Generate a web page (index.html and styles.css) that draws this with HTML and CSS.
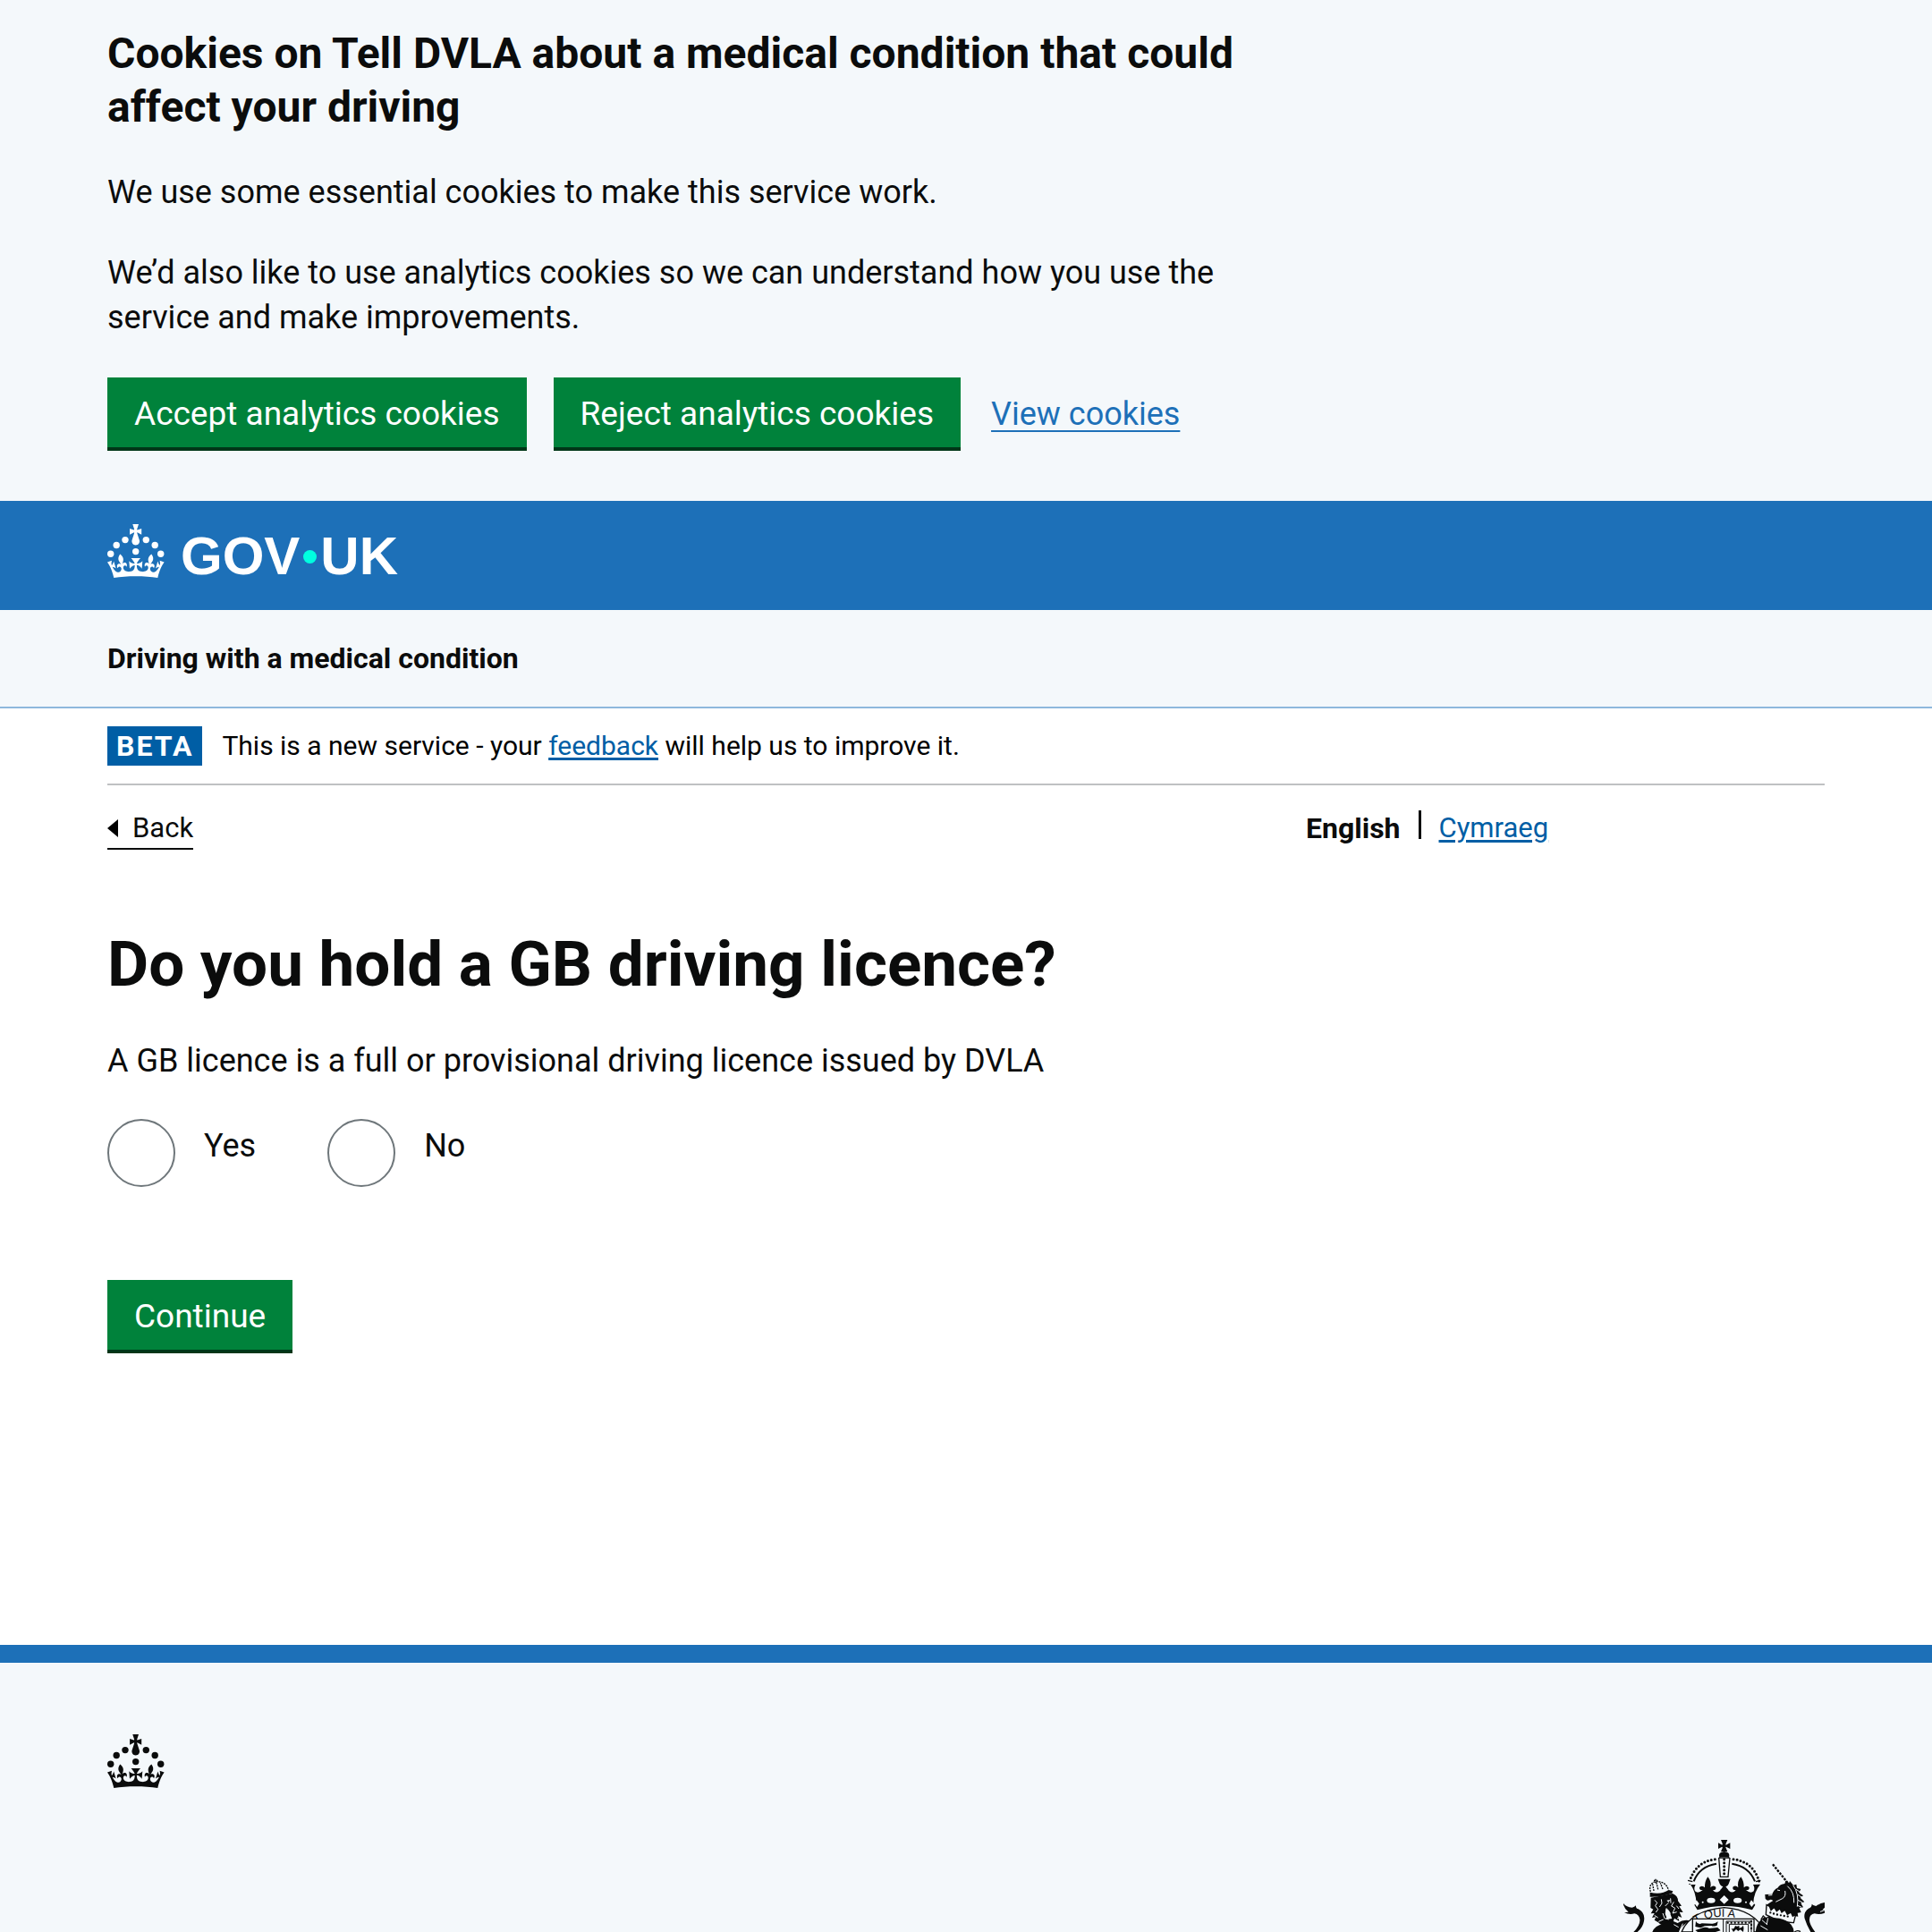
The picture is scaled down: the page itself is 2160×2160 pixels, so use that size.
FILE: index.html
```html
<!DOCTYPE html>
<html lang="en">
<head>
<meta charset="utf-8">
<meta name="viewport" content="width=device-width, initial-scale=1">
<title>Do you hold a GB driving licence?</title>
<link rel="stylesheet" href="styles.css">
</head>
<body>
<svg class="defs" width="0" height="0" aria-hidden="true">
  <symbol id="crown" viewBox="0 0 64 60">
    <circle cx="20" cy="17.6" r="3.7"/><circle cx="10.2" cy="23.5" r="3.7"/><circle cx="3.7" cy="33.2" r="3.7"/><circle cx="31.7" cy="30.6" r="3.7"/><circle cx="43.3" cy="17.6" r="3.7"/><circle cx="53.2" cy="23.5" r="3.7"/><circle cx="59.7" cy="33.2" r="3.7"/>
    <path d="M33.1,9.8c.2-.1.3-.3.5-.5l4.6,2.4v-6.8l-4.6,1.5c-.1-.2-.3-.3-.5-.5l1.9-5.9h-6.7l1.9,5.9c-.2.1-.3.3-.5.5l-4.6-1.5v6.8l4.6-2.4c.1.2.3.3.5.5l-2.6,8c-.9,2.8,1.2,5.7,4.1,5.7h0c3,0,5.1-2.9,4.1-5.7l-2.6-8ZM37,37.9s-3.4,3.8-4.1,6.1c2.2,0,4.2-.5,6.4-2.8l-.7,8.5c-2-2.8-4.4-4.1-5.7-3.8.1,3.1.5,6.7,5.8,7.2,3.7.3,6.7-1.5,7-3.8.4-2.6-2-4.3-3.7-1.6-1.4-4.5,2.4-6.1,4.9-3.2-1.9-4.5-1.8-7.7,2.4-10.9,3,4,2.6,7.3-1.2,11.1,2.4-1.3,6.2,0,4,4.6-1.2-2.8-3.7-2.2-4.2.2-.3,1.7.7,3.7,3,4.2,1.9.3,4.7-.9,7-5.9-1.3,0-2.4.7-3.9,1.7l2.4-8c.6,2.3,1.4,3.7,2.2,4.5.6-1.6.5-2.8,0-5.3l5,1.8c-2.6,3.6-5.2,8.7-7.3,17.5-7.4-1.1-15.7-1.7-24.5-1.7h0c-8.8,0-17.1.6-24.5,1.7-2.1-8.9-4.7-13.9-7.3-17.5l5-1.8c-.5,2.5-.6,3.7,0,5.3.8-.8,1.6-2.3,2.2-4.5l2.4,8c-1.5-1-2.6-1.7-3.9-1.7,2.3,5,5.2,6.2,7,5.9,2.3-.4,3.3-2.4,3-4.2-.5-2.4-3-3.1-4.2-.2-2.2-4.6,1.6-6,4-4.6-3.7-3.7-4.2-7.1-1.2-11.1,4.2,3.2,4.3,6.4,2.4,10.9,2.5-2.8,6.3-1.3,4.9,3.2-1.8-2.7-4.1-1-3.7,1.6.3,2.3,3.3,4.1,7,3.8,5.4-.5,5.7-4.2,5.8-7.2-1.3-.2-3.7,1-5.7,3.8l-.7-8.5c2.2,2.3,4.2,2.7,6.4,2.8-.7-2.3-4.1-6.1-4.1-6.1h10.6,0Z"/>
  </symbol>
</svg>

<section class="cookies" aria-label="Cookies">
  <div class="cookies-body">
    <h2 class="cookies-title">Cookies on Tell DVLA about a medical condition that could affect your driving</h2>
    <p class="text">We use some essential cookies to make this service work.</p>
    <p class="text">We’d also like to use analytics cookies so we can understand how you use the service and make improvements.</p>
  </div>
  <div class="cookies-actions">
    <button class="button" type="button">Accept analytics cookies</button>
    <button class="button" type="button">Reject analytics cookies</button>
    <a class="cookies-link" href="#cookies">View cookies</a>
  </div>
</section>

<header class="header">
  <a class="logo" href="#home" aria-label="GOV.UK">
    <svg class="crown" aria-hidden="true"><use href="#crown"/></svg>
    <span class="logo-text">GOV<span class="logo-dot"></span>UK</span>
  </a>
</header>

<div class="service"><a class="service-name" href="#service">Driving with a medical condition</a></div>

<div class="wrap">
  <div class="phase">
    <strong class="tag">BETA</strong>
    <span>This is a new service - your <a class="link" href="#feedback">feedback</a> will help us to improve it.</span>
  </div>
  <div class="toolbar">
    <div><a class="back" href="#back"><svg class="back-arrow" viewBox="0 0 12 20" aria-hidden="true"><path d="M12 0v20L0 10z"/></svg>Back</a></div>
    <nav class="languages" aria-label="Language">
      <strong>English</strong>
      <span class="divider"></span>
      <a class="link" href="#cy" lang="cy">Cymraeg</a>
    </nav>
  </div>
  <main>
    <form class="question">
      <h1 class="title">Do you hold a GB driving licence?</h1>
      <p class="text" id="hint">A GB licence is a full or provisional driving licence issued by DVLA</p>
      <div class="radios" role="radiogroup" aria-describedby="hint">
        <label class="radio"><input type="radio" name="licence" value="yes"><span>Yes</span></label>
        <label class="radio"><input type="radio" name="licence" value="no"><span>No</span></label>
      </div>
      <button class="button" type="button">Continue</button>
    </form>
  </main>
</div>

<footer class="footer">
  <svg class="crown" aria-hidden="true"><use href="#crown"/></svg>
  <svg class="arms" viewBox="105 81 675 309" role="img" aria-label="Royal coat of arms">
    <!-- main crown: cross, orb, arches -->
    <path d="M432 81h22l-5 12q-2 4 0 5l14-7v20l-14-7q-2 1 0 5l5 11h-22l5-11q1-4-1-5l-13 7V91l13 7q2-1 1-5z"/>
    <path d="M427 141q-6-19 16-21q22 2 16 21l-6-3h-20z"/>
    <path d="M425 141h36M425 141l5 63M462 141l-6 63M428 205h30" class="stroke w4"/>
    <path d="M443 146v60" class="stroke w9 bead"/>
    <path d="M412 146Q348 154 327 220M474 146Q540 154 560 220" class="stroke w9 bead"/>
    <path d="M417 161Q360 170 341 220M469 161Q526 170 546 220" class="stroke w6"/>
    <path d="M321 217l16 4M549 221l16-4" class="stroke w4"/>
    <!-- crown fleurs, crosses and band -->
    <path d="M323 230l24 1q-7 12-2 22q10 10 26-4q-12 2-11-9q10-8 18 1q-1-20 10-36q13 15 9 36q8-10 18-2q2 11-10 10q10 14 24 2q9-11-1-22l-6-17h42l-6 17q-9 11 0 22q14 12 24-2q-12 1-10-10q10-8 18 2q-4-21 9-36q11 16 10 36q8-9 18-1q1 11-11 9q16 14 26 4q5-10-2-22l24-1q-22 27-23 62l6 7l-10 17q-93-26-184 0l-10-17l6-7q0-35-21-65z"/>
    <g class="paper">
      <path d="M443 267l15 15l-15 14l-15-14zM350 283l9 12l-7 11l-8-11zM534 283l10 12l-9 11l-8-11z"/>
      <ellipse cx="399" cy="284" rx="14" ry="9"/><ellipse cx="488" cy="284" rx="14" ry="9"/>
      <circle cx="371" cy="290" r="3"/><circle cx="516" cy="290" r="3"/>
      <path d="M429 233l10 5l-7 9zM458 233l-10 5l7 9z"/>
    </g>
    <!-- garter and shield -->
    <path d="M300 390Q330 318 443 308Q545 315 580 390z" class="paper outline"/>
    <path id="garter" d="M330 380Q362 338 443 339Q520 340 552 384" fill="none"/>
    <text class="motto"><textPath href="#garter" startOffset="26">T QUI A</textPath></text>
    <path d="M337 346h206v50H337z" class="paper outline"/>
    <path d="M440 346v44M450 354h84v36M450 354v36M460 390v-26h64v26" class="stroke w3"/>
    <path d="M534 354v36M455 359h74" class="stroke w7 bead"/>
    <path d="M348 354q8 14 20 7l34 1q10 1 20-7l-3 13q-15 5-18 1l-23 1l-14 6l-18-4zM346 384l19-6q15-8 28 0l28-3l10 10l-17 5h-60z"/>
    <path d="M474 390l-7-12q9 5 13-9q7 5 13-1l1 9q9-2 13-9q3 9 0 22l-10-8l-7 5l-7-6z"/>
    <!-- lion -->
    <path d="M196 255q-8-26 16-34q36-2 44 28M207 252l-4-23M221 247l-6-26M237 246l-8-20M213 212v14M207 217h13" class="stroke w4 fine"/>
    <path d="M194 257q38 9 63-8l14 4l-3 7q-35 13-74 12z"/>
    <path d="M197 275l73-14q18 7 18 25l12 16l-8 2l13 20l-12-1l8 19l-13-6l4 18l-16-10l-6 16q-27 20-48-2l-13-8l5-10l-13 2l8-15l-12 1l8-14l-9-5z"/>
    <path d="M210 283l8 9l-6 10l9 12l-7 10M232 280l2 14l-8 12M245 303l11-11M263 277l1 16M274 289l-8 14l12 7l-8 17l14-4M249 310l13 17l-14 20M237 327l6 17l14 4M209 334l12 8M223 355l16-7M283 302l8 10" class="line"/>
    <path d="M250 284l13-2l-7 8zM247 311l11 7l10 27l-16 2l-7-18z" class="paper"/>
    <path d="M202 390q10-23 35-26l30-12l20 8q18-13 42-8q-31 17-38 38z"/>
    <path d="M285 345q10-5 17 1M274 365l16 9M304 362l-10 24" class="line"/>
    <!-- lion's tail -->
    <path d="M103 291q10 16 31 17q8-2 13-7q-1 10 8 12q24 12 19 40q-4 24-26 40h-12q26-25 24-45q-2-17-18-20q-17 5-34-3l14-2q-16-12-19-32z"/>
    <!-- unicorn -->
    <path d="M606 163L655 224" class="stroke w7 horn"/>
    <path d="M580 264l24-1q6-16 18-21q9-13 24-14l3-10l12 7l2-6l12 14l10-3l2 13l13 3l-6 12l14 10l-10 7l14 14l-12 4l8 14l-13 3l6 14l-12 2l2 12l-10-1l-6 13q-34-3-78-17l-14-24l6-13l18-11q-8-6-12-2q-8 4-14-5z"/>
    <path d="M591 267l13-1M621 249l9 2M655 236q24 20 22 56M674 233q21 28 14 72M684 247l15 10M690 265l16 10M690 283l16 8M687 300l15 7M647 252q4 19-9 26l-22 11" class="line"/>
    <path d="M585 299l10 5l5 13l11-10l8 13l11-9l6 13l11-8l8 15l12-7l6 13l10-6l-7 28q-45-1-93-27z" class="paper outline"/>
    <path d="M598 325q30 10 68 14" class="stroke w7 bead"/>
    <path d="M548 390q3-32 27-48q58-2 75 10q24 11 27 38z"/>
    <path d="M570 350l18 16M590 342l-4 21M565 369l24 14" class="line"/>
    <path d="M566 349l8-13l9 8l12-6l4 9" class="stroke w4"/>
    <!-- unicorn's tail -->
    <path d="M780 291q-17 3-29 12q-12-3-14-7q0 12-11 15q-18 13-13 34q6 20 20 45h15q-21-27-19-43q1-17 17-19q17 5 34-2v-9l-8-1l8-8z"/>
    <path d="M765 322l15-5" class="line"/>
    <path d="M679 390q9-8 20-1" class="stroke w4"/>
  </svg>
</footer>
</body>
</html>
```
FILE: styles.css
```css
* { box-sizing: border-box; }

body {
  margin: 0;
  min-height: 100vh;
  display: flex;
  flex-direction: column;
  background: #fff;
  color: #0b0c0c;
  font-family: Roboto, "Liberation Sans", sans-serif;
  font-size: 31px;
  line-height: 40px;
}

.defs { position: absolute; }

.cookies {
  padding: 30px 120px 56px;
  background: #f4f8fb;
}
.cookies-body {
  max-width: 1280px;
  padding-bottom: 2px;
}
.cookies-title {
  margin: 0 0 40px;
  font-size: 48px;
  line-height: 60px;
  font-weight: 700;
}
.text {
  margin: 0 0 40px;
  font-size: 36px;
  line-height: 50px;
}
.cookies-actions {
  display: flex;
  flex-wrap: wrap;
  align-items: center;
  gap: 30px;
}
.cookies-link {
  margin-left: 4px;
  color: #1d70b8;
  font-size: 36px;
  line-height: 50px;
  text-decoration-thickness: 2px;
  text-underline-offset: 6px;
}

.button {
  margin: 0;
  padding: 16px 30px 12px;
  border: 0;
  border-radius: 0;
  border-bottom: 4px solid #003618;
  background: #00823b;
  color: #fff;
  font-family: inherit;
  font-size: 37px;
  line-height: 50px;
}

.header {
  padding: 26px 120px 36px;
  background: #1d70b8;
}
.logo {
  display: flex;
  gap: 18px;
  width: max-content;
  color: #fff;
  text-decoration: none;
}
.crown {
  display: block;
  width: 64px;
  height: 60px;
  fill: currentColor;
}
.logo-text {
  display: flex;
  align-items: center;
  padding-top: 12px;
  font-family: "Liberation Sans", Arial, sans-serif;
  font-size: 60px;
  font-weight: 700;
  line-height: 48px;
}
.logo-dot {
  width: 15px;
  height: 15px;
  margin: 0 4px;
  border-radius: 50%;
  background: #00ffe0;
}

.service {
  padding: 34px 120px;
  border-bottom: 2px solid #8eb8dc;
  background: #f4f8fb;
}
.service-name {
  display: block;
  width: max-content;
  max-width: 100%;
  color: inherit;
  font-size: 32px;
  font-weight: 700;
  text-decoration: none;
}

.wrap { padding: 0 120px; }
.phase {
  display: flex;
  align-items: center;
  gap: 22px;
  padding: 20px 0;
  border-bottom: 2px solid #bfc1c3;
  color: #000;
  font-size: 30px;
}
.tag {
  padding: 2px 10px;
  background: #005ea5;
  color: #fff;
  font-size: 32px;
  letter-spacing: 2px;
}
.link {
  color: #005ea5;
  text-decoration-thickness: 3px;
  text-underline-offset: 3px;
}

.toolbar {
  display: grid;
  grid-template-columns: 2fr 1fr;
  padding: 28px 0 88px;
}
.back {
  display: inline-flex;
  align-items: center;
  gap: 16px;
  padding-bottom: 2px;
  border-bottom: 2px solid #0b0c0c;
  color: inherit;
  text-decoration: none;
}
.back-arrow { width: 12px; height: 20px; }
.languages {
  display: flex;
  gap: 20px;
  padding-left: 60px;
}
.languages strong { font-size: 32px; }
.divider {
  width: 3px;
  height: 32px;
  background: #0b0c0c;
}

.title {
  margin: 0 0 43px;
  font-size: 71px;
  line-height: 80px;
  font-weight: 700;
}
.radios {
  display: flex;
  gap: 80px;
  margin-bottom: 104px;
}
.radio {
  display: flex;
  gap: 32px;
  font-size: 36px;
  line-height: 60px;
}
.radio input {
  appearance: none;
  width: 76px;
  height: 76px;
  margin: 0;
  border: 2px solid #6f777b;
  border-radius: 50%;
}

.footer {
  display: flex;
  flex-direction: column;
  flex: 1;
  margin-top: 326px;
  padding: 80px 120px 0;
  border-top: 20px solid #1d70b8;
  background: #f4f8fb;
}
.arms {
  display: block;
  align-self: flex-end;
  width: 225px;
  height: 103px;
  margin-top: auto;
  fill: #0b0c0c;
}
.arms .stroke { fill: none; stroke: #0b0c0c; }
.arms .w3 { stroke-width: 3; }
.arms .w4 { stroke-width: 4; }
.arms .w6 { stroke-width: 6; }
.arms .w7 { stroke-width: 7; }
.arms .w9 { stroke-width: 9; }
.arms .bead { stroke-dasharray: 0 12; stroke-linecap: round; }
.arms .fine { stroke-dasharray: 6 3; }
.arms .horn { stroke-dasharray: 8 4; }
.arms .paper { fill: #f4f8fb; }
.arms .outline { stroke: #0b0c0c; stroke-width: 4; }
.arms .line { fill: none; stroke: #f4f8fb; stroke-width: 3; }
.arms .motto {
  font-family: "Liberation Sans", Arial, sans-serif;
  font-size: 38px;
}
```
